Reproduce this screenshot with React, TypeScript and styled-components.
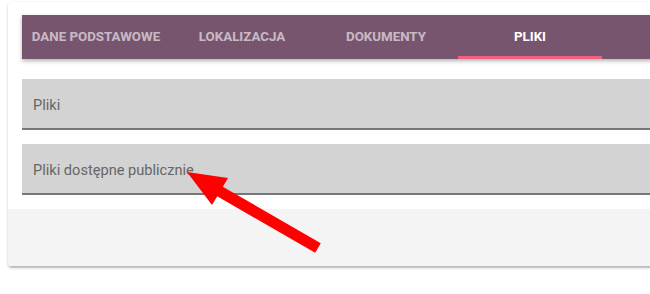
import React from 'react'
import styled, { createGlobalStyle } from 'styled-components'

const GlobalStyle = createGlobalStyle`
  body {
    margin: 0;
    background: #fff;
    font-family: Roboto, 'Liberation Sans', sans-serif;
    overflow: hidden;
  }
`

const Page = styled.div`
  position: relative;
  width: 650px;
  height: 294px;
  padding: 2px 0 0 8px;
  box-sizing: border-box;
`

const Card = styled.div`
  width: 660px;
  background: #fff;
  border-radius: 4px;
  box-shadow: 0 1px 3px rgba(0, 0, 0, 0.2), 0 1px 1px rgba(0, 0, 0, 0.1);
  overflow: hidden;
`

const Body = styled.div`
  display: flex;
  flex-direction: column;
  padding: 13px 0 14px 14px;
`

const TabBar = styled.nav`
  display: flex;
  height: 44px;
  background: #77556f;
  box-shadow: 0 2px 4px rgba(0, 0, 0, 0.3);
  margin-bottom: 20px;
`

const Tab = styled.div<{ $active?: boolean; $width: number }>`
  position: relative;
  display: flex;
  align-items: center;
  justify-content: center;
  padding-bottom: 2px;
  width: ${({ $width }) => $width}px;
  font-size: 13.3px;
  font-weight: 700;
  color: ${({ $active }) => ($active ? '#fff' : 'rgba(255, 255, 255, 0.62)')};
  &::after {
    content: '';
    display: ${({ $active }) => ($active ? 'block' : 'none')};
    position: absolute;
    left: 0;
    right: 0;
    bottom: 0;
    height: 3px;
    background: #f0607f;
  }
`

const Field = styled.div<{ $gap: number }>`
  display: flex;
  align-items: center;
  box-sizing: border-box;
  height: 51px;
  padding: 2px 11px 0 11px;
  background: #d3d3d3;
  border-bottom: 2px solid #777;
  margin-bottom: ${({ $gap }) => $gap}px;
  font-size: 14.6px;
  color: #666;
`

const Footer = styled.div`
  height: 57px;
  background: #f4f4f4;
  border-bottom: 1px solid #bbb;
`

const Arrow = styled.svg`
  position: absolute;
  left: 0;
  top: 0;
  pointer-events: none;
`

const tabs = [
  { label: 'DANE PODSTAWOWE', width: 148 },
  { label: 'LOKALIZACJA', width: 144 },
  { label: 'DOKUMENTY', width: 144 },
  { label: 'PLIKI', width: 144, active: true },
]

const App = () => (
  <Page>
    <GlobalStyle />
    <Card>
      <Body>
        <TabBar>
          {tabs.map((t) => (
            <Tab key={t.label} $width={t.width} $active={t.active}>
              {t.label}
            </Tab>
          ))}
        </TabBar>
        <Field $gap={14}>Pliki</Field>
        <Field $gap={0}>Pliki dostępne publicznie</Field>
      </Body>
      <Footer />
    </Card>
    <Arrow width="650" height="294" viewBox="0 0 650 294">
      <polygon
        points="187,172 228,178 222.8,186.7 320.8,243.2 315.2,252.8 217.2,196.3 212,205"
        fill="#ff0000"
      />
    </Arrow>
  </Page>
)

export default App
